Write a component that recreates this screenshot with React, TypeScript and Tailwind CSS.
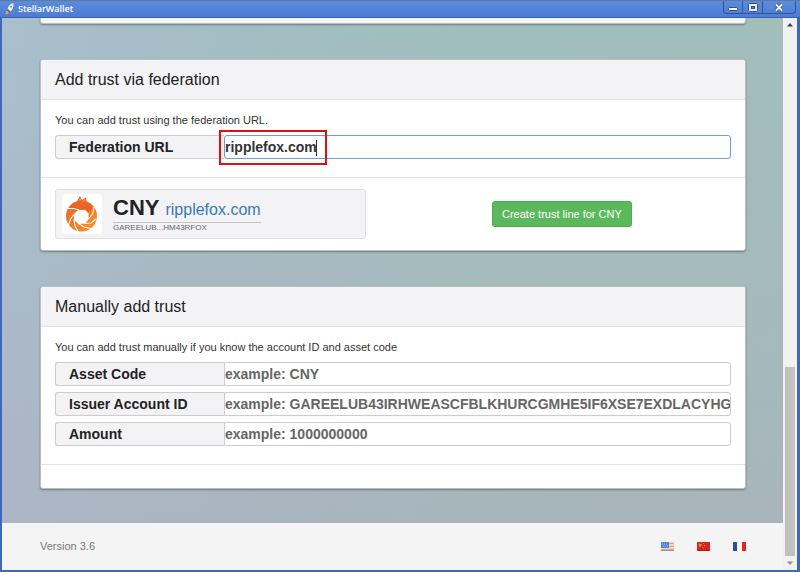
import type { ReactNode } from 'react';

const manualFields = [
  { id: 'asset-code', label: 'Asset Code', placeholder: 'example: CNY' },
  {
    id: 'issuer',
    label: 'Issuer Account ID',
    placeholder: 'example: GAREELUB43IRHWEASCFBLKHURCGMHE5IF6XSE7EXDLACYHGRHM43RFOX'
  },
  { id: 'amount', label: 'Amount', placeholder: 'example: 1000000000' }
];

const RocketIcon = () => (
  <svg viewBox="0 0 12 14" className="w-3 h-3.5">
    <path d="M1.500 12 L2 9 L4.500 8.500 L5.500 10 L4 12 Z" fill="#f0a04b" />
    <path d="M3.500 7.500 C4 4 6 1.500 9.500 1 C10 5 8.500 8 6 10 Z" fill="#e9edf3" />
    <path d="M4 7 L2.500 8.500 L4 9 L5 11 L6.500 9.500 Z" fill="#58637a" />
    <circle cx="7" cy="4.800" r="1" fill="#6f9fc4" />
  </svg>
);

// fox curled into a camera aperture
const FoxLogo = () => (
  <svg viewBox="0 0 40 40" className="w-10 h-10">
    <defs>
      <linearGradient id="fox" x1="0" y1="0" x2="1" y2="1">
        <stop offset="0" stopColor="#ee5f22" />
        <stop offset="1" stopColor="#f9952f" />
      </linearGradient>
    </defs>
    <circle cx="19.500" cy="22" r="15.500" fill="url(#fox)" />
    <path d="M16 16 L23 16 L26.500 19.500 L26.500 25.500 L23 29.500 L16.500 30 L12 26 L12 20 Z" fill="#fff" />
    <g stroke="#fff" strokeWidth="1.100" fill="none">
      <path d="M17 16 L12 14.500 L6 14.500" />
      <path d="M12.500 20 L8.500 25 L6.500 31" />
      <path d="M12 25.500 L13 32 L16.500 38" />
      <path d="M16.500 29.500 L22 33 L29 34.500" />
      <path d="M22.500 29.500 L29 29 L34 25" />
      <path d="M26.500 25 L30.500 20 L32 13" />
    </g>
    <path
      d="M8 12.500 C10 10 12.500 8.500 15 7.500 L18 2 L20 6 L24 3.500 L24.500 8 L29 11 L30.500 14.500 L27 18.500 L23 15 L16 15 Z"
      fill="#ec6424"
    />
    <path d="M18.200 4.500 L18 7 M22.500 5.500 L21.500 8" stroke="#f9b08c" strokeWidth="0.800" />
  </svg>
);

const flags = [
  {
    name: 'English',
    art: (
      <>
        <rect width="13" height="9" fill="#f0d2c8" />
        <path d="M0 1.500 H13 M0 4.500 H13 M0 7.500 H13" stroke="#dba596" />
        <rect width="8" height="6" fill="#4f86cf" />
        <path d="M1 2 H6 M2 4 H7" stroke="#9dbfe8" strokeDasharray="1 1" />
        <path d="M0 8.500 H13" stroke="#a08f91" />
      </>
    )
  },
  {
    name: 'Chinese',
    art: (
      <>
        <rect width="13" height="9" fill="#d9251c" />
        <path d="M1.500 3 H5 M3 1.500 V5 M6 1.500 H7 M7 3.500 H8 M5.500 5.500 H6.500" stroke="#f3a53f" />
        <path d="M0 8.500 H13" stroke="#a81e18" />
      </>
    )
  },
  {
    name: 'French',
    art: (
      <>
        <rect width="13" height="9" fill="#fff" />
        <rect width="4" height="9" fill="#2b4f9c" />
        <rect x="9" width="4" height="9" fill="#e3242b" />
      </>
    )
  }
];

const TitleBar = () => (
  <header className="flex h-[18px] shrink-0 items-start justify-between border-t border-b border-t-[#64789b] border-b-[#3561b0] bg-linear-to-b from-[#5a8bdc] to-[#4c7dd2] px-1">
    <div className="flex items-center gap-0.5 text-white">
      <RocketIcon />
      <span className="font-['Open_Sans',sans-serif] text-[9px] leading-4 font-semibold">StellarWallet</span>
    </div>
    <div className="flex h-[13px] divide-x divide-[#2f559b] rounded-b-sm border border-t-0 border-[#2f559b]">
      <button aria-label="Minimize" className="flex w-[19px] items-center justify-center">
        <svg viewBox="0 0 10 9" className="w-2.5 h-[9px]">
          <rect x="0.500" y="4.500" width="9" height="3" rx="1" fill="#fff" stroke="#2c4f8f" />
        </svg>
      </button>
      <button aria-label="Maximize" className="flex w-5 items-center justify-center">
        <svg viewBox="0 0 10 9" className="w-2.5 h-[9px]">
          <rect x="0.500" y="0.500" width="9" height="8" rx="1" fill="#e8effa" stroke="#2c4f8f" />
          <rect x="3.500" y="3.500" width="3" height="2" fill="#4c7dd2" stroke="#2c4f8f" />
        </svg>
      </button>
      <button aria-label="Close" className="flex w-8 items-center justify-center">
        <svg viewBox="0 0 10 9" className="w-2.5 h-[9px]">
          <path d="M2 1.500 L8 7.500 M8 1.500 L2 7.500" stroke="#2c4f8f" strokeWidth="3.500" />
          <path d="M2 1.500 L8 7.500 M8 1.500 L2 7.500" stroke="#fff" strokeWidth="1.800" />
        </svg>
      </button>
    </div>
  </header>
);

const ScrollBar = () => (
  <div className="flex w-3.5 shrink-0 flex-col items-center bg-[#f1f1f1]">
    <svg viewBox="0 0 14 14" className="w-3.5 h-3.5 shrink-0">
      <path d="M4 8.500 L7 5 L10 8.500 Z" fill="#444" />
    </svg>
    <div className="flex w-full flex-1 flex-col justify-end px-0.5">
      <div className="h-[36%] bg-[#c1c1c1]"></div>
    </div>
    <svg viewBox="0 0 14 14" className="w-3.5 h-3.5 shrink-0">
      <path d="M4 5.500 L7 9 L10 5.500 Z" fill="#8c8c8c" />
    </svg>
  </div>
);

const Panel = ({ title, children }: { title: string; children: ReactNode }) => (
  <section className="rounded-[3px] border border-[#b4bfc6] bg-white shadow-[0_1px_2px_rgba(0,0,0,0.35)]">
    <h2 className="rounded-t-[3px] border-b border-[#e2e2e5] bg-[#f3f3f5] px-3.5 text-base leading-[39px] text-[#222]">
      {title}
    </h2>
    {children}
  </section>
);

const FieldLabel = ({ id, children }: { id: string; children: ReactNode }) => (
  <label
    htmlFor={id}
    className="w-1/4 shrink-0 rounded-l-[3px] border border-r-0 border-[#ccc] bg-[#f3f3f5] pl-[13px] text-sm leading-[22px] font-bold text-[#222]"
  >
    {children}
  </label>
);

export default function App() {
  return (
    <div className="flex min-h-screen flex-col bg-[#3c69b8] font-['Liberation_Sans',Arial,sans-serif] text-[#333]">
      <TitleBar />
      <div className="mr-[3px] mb-0.5 ml-0.5 flex flex-1">
        <div className="flex min-w-0 flex-1 flex-col bg-[#f4f4f4]">
          <main className="flex flex-col gap-[35px] bg-[linear-gradient(to_bottom,rgba(178,168,186,0)_0%,rgba(178,168,186,0.4)_100%),linear-gradient(to_right,#a9bfcc_0%,#a4bdc4_30%,#a0bfbc_60%,#a1bebb_100%)] pr-[37px] pb-[34px] pl-[38px]">
            <div className="h-1.5 rounded-b-[3px] border border-t-0 border-[#b4bfc6] bg-[#f5f5f5] shadow-[0_1px_2px_rgba(0,0,0,0.35)]"></div>

            <Panel title="Add trust via federation">
              <div className="border-b border-[#e4e4e4] px-3.5 pt-3 pb-[18px]">
                <p className="mb-1.5 text-[11px] leading-[17px]">You can add trust using the federation URL.</p>
                <div className="flex">
                  <FieldLabel id="federation">Federation URL</FieldLabel>
                  <div className="relative flex-1">
                    <input
                      id="federation"
                      type="text"
                      defaultValue="ripplefox.com"
                      className="block h-6 w-full rounded-[3px] border border-[#66a0e8] bg-white text-sm font-bold text-[#333] outline-none"
                    />
                    <div className="pointer-events-none absolute -top-[5px] -left-[5px] flex h-[35px] w-[108px] items-center justify-end border-2 border-[#e01010] pr-2">
                      <span className="h-4 w-px bg-[#333]"></span>
                    </div>
                  </div>
                </div>
              </div>
              <div className="grid grid-cols-2 items-center px-3.5 pt-[11px] pb-[11px]">
                <div className="flex h-[50px] w-[311px] items-center gap-[11px] rounded-[3px] border border-[#dfdfe2] bg-[#f3f3f5] pl-1.5">
                  <div className="rounded-sm bg-white">
                    <FoxLogo />
                  </div>
                  <div>
                    <div className="flex items-baseline gap-1.5 border-b border-[#c4c4c6] leading-6">
                      <span className="text-[22px] font-bold text-[#222]">CNY</span>
                      <a href="#ripplefox" className="text-base text-[#337ab7]">ripplefox.com</a>
                    </div>
                    <div className="text-[8px] leading-[9px] text-[#666]">GAREELUB...HM43RFOX</div>
                  </div>
                </div>
                <button className="ml-[99px] h-[26px] justify-self-start rounded-[3px] border border-[#4cae4c] bg-[#5cb85c] px-[9px] text-[11px] whitespace-nowrap text-white">
                  Create trust line for CNY
                </button>
              </div>
            </Panel>

            <Panel title="Manually add trust">
              <div className="border-b border-[#e4e4e4] px-3.5 pt-3 pb-[18px]">
                <p className="mb-1.5 text-[11px] leading-[17px]">
                  You can add trust manually if you know the account ID and asset code
                </p>
                <div className="flex flex-col gap-1.5">
                  {manualFields.map((field) => (
                    <div key={field.id} className="flex">
                      <FieldLabel id={field.id}>{field.label}</FieldLabel>
                      <input
                        id={field.id}
                        type="text"
                        placeholder={field.placeholder}
                        className="h-6 min-w-0 flex-1 rounded-r-[3px] border border-[#ccc] bg-white text-sm font-bold text-[#333] outline-none placeholder:text-[#666]"
                      />
                    </div>
                  ))}
                </div>
              </div>
              <div className="h-[23px]"></div>
            </Panel>
          </main>

          <footer className="flex flex-1 items-center justify-between pr-[37px] pl-[38px] text-[11px] text-[#777]">
            <span>Version 3.6</span>
            <nav className="flex gap-[23px]">
              {flags.map((flag) => (
                <a key={flag.name} href={`#${flag.name}`} aria-label={flag.name}>
                  <svg viewBox="0 0 13 9" className="h-[9px] w-[13px]">{flag.art}</svg>
                </a>
              ))}
            </nav>
          </footer>
        </div>
        <ScrollBar />
      </div>
    </div>
  );
}
